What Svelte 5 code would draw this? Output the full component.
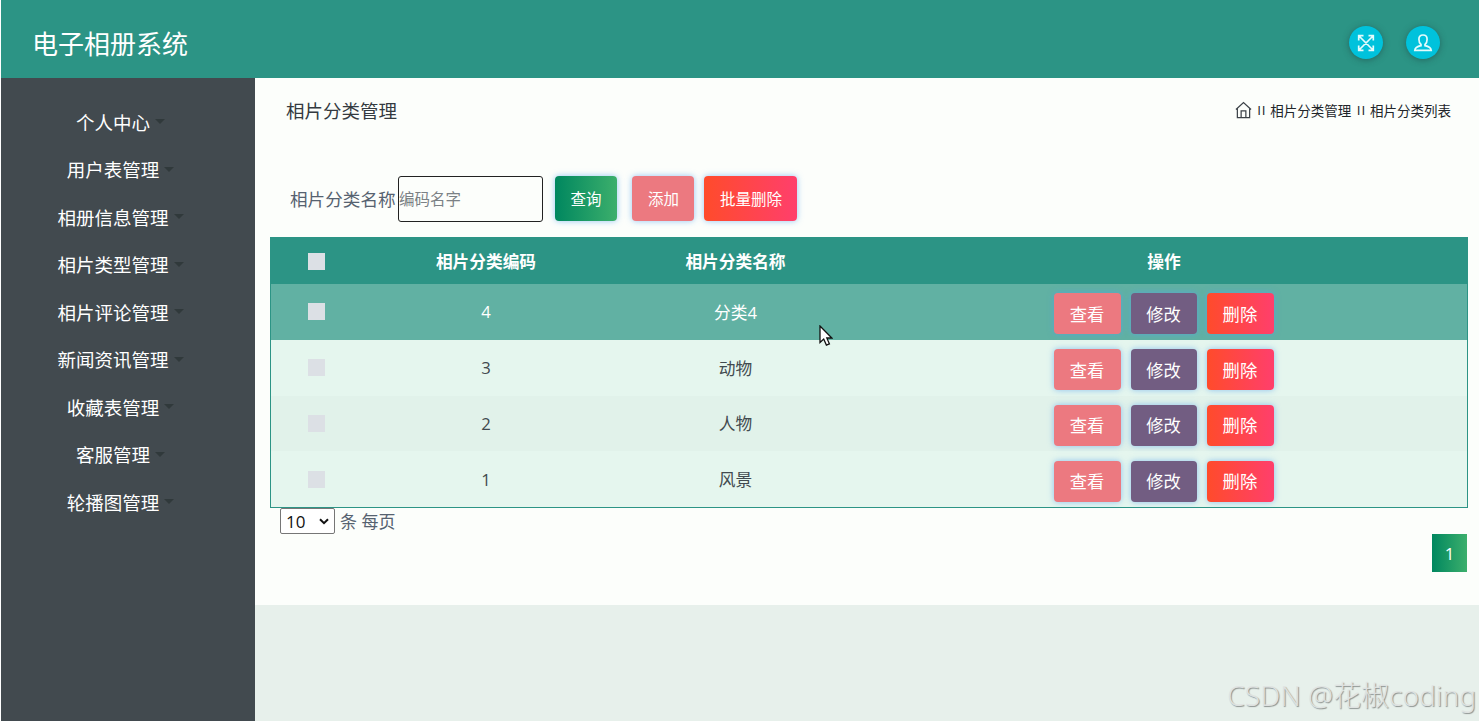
<script>
  const menus = [
    "个人中心",
    "用户表管理",
    "相册信息管理",
    "相片类型管理",
    "相片评论管理",
    "新闻资讯管理",
    "收藏表管理",
    "客服管理",
    "轮播图管理",
  ];

  const rows = [
    { code: 4, name: "分类4" },
    { code: 3, name: "动物" },
    { code: 2, name: "人物" },
    { code: 1, name: "风景" },
  ];

  let keyword = "";
  let pageSize = "10";
</script>

<div class="page">
  <header class="navbar">
    <h1>电子相册系统</h1>
    <div class="nav-icons">
      <button class="round" aria-label="全屏">
        <svg width="18" height="18" viewBox="0 0 18 18" fill="none" stroke="#e4fbfc" stroke-width="1.7">
          <path d="M1.700 6.500V1.700h4.800M11.500 1.700h4.800v4.800M16.300 11.500v4.800h-4.800M6.500 16.300H1.700v-4.800M2 2l14 14M16 2L2 16" />
        </svg>
      </button>
      <button class="round" aria-label="用户">
        <svg width="20" height="20" viewBox="0 0 20 20" fill="none" stroke="#e4fbfc" stroke-width="1.7">
          <path d="M8 11.500C6.400 10.200 5.900 8.200 5.900 6.200C5.900 3.500 7.400 2 10 2s4.100 1.500 4.100 4.200c0 2-.5 4-2.100 5.300v1.200c2.800.6 5.900 1.700 6.200 4.600H1.800c.3-2.900 3.400-4 6.200-4.600z" />
        </svg>
      </button>
    </div>
  </header>

  <div class="body">
    <nav class="sidebar">
      {#each menus as menu}
        <a href="#menu">{menu}<span class="caret"></span></a>
      {/each}
    </nav>

    <main>
      <section class="content">
        <div class="heading">
          <h2>相片分类管理</h2>
          <div class="breadcrumb">
            <svg width="17" height="18" viewBox="0 0 18 18" fill="none" stroke="#3c4248" stroke-width="1.3">
              <path d="M1 8.400L9 1.200l8 7.200M2.500 7v10h13V7M6.500 17V10h5v7" />
            </svg>
            <span class="sep">II</span>
            <span>相片分类管理</span>
            <span class="sep">II</span>
            <span>相片分类列表</span>
          </div>
        </div>

        <div class="search">
          <label for="keyword">相片分类名称</label>
          <input id="keyword" placeholder="编码名字" bind:value={keyword} />
          <button class="btn query">查询</button>
          <button class="btn pink add">添加</button>
          <button class="btn red">批量删除</button>
        </div>

        <table>
          <colgroup>
            <col class="c-check" />
            <col class="c-code" />
            <col class="c-name" />
            <col />
          </colgroup>
          <thead>
            <tr>
              <th><span class="check"></span></th>
              <th>相片分类编码</th>
              <th>相片分类名称</th>
              <th>操作</th>
            </tr>
          </thead>
          <tbody>
            {#each rows as row, index}
              <tr class:active={index === 0}>
                <td><span class="check"></span></td>
                <td>{row.code}</td>
                <td>{row.name}</td>
                <td>
                  <div class="actions">
                    <button class="btn pink">查看</button>
                    <button class="btn purple">修改</button>
                    <button class="btn red">删除</button>
                  </div>
                </td>
              </tr>
            {/each}
          </tbody>
        </table>

        <div class="page-size">
          <div class="select">
            <select bind:value={pageSize} aria-label="每页条数">
              <option>10</option>
              <option>25</option>
              <option>50</option>
            </select>
            <svg width="10" height="7" viewBox="0 0 10 7" fill="none" stroke="#111" stroke-width="2">
              <path d="M1 1.200l4 4 4-4" />
            </svg>
          </div>
          <span>条 每页</span>
        </div>

        <div class="pagination">
          <button>1</button>
        </div>
      </section>
    </main>
  </div>

  <svg class="cursor" width="14" height="22" viewBox="0 0 14 22">
    <path d="M1 1v16.500l3.700-3.400 2.700 6 3-1.300-2.600-5.800h5z" fill="#fff" stroke="#111" stroke-width="1.300" />
  </svg>
  <div class="watermark">CSDN @花椒coding</div>
</div>

<style>
  :global(body) {
    background: #fff;
    overflow: hidden;
  }

  .page {
    position: relative;
    display: flex;
    flex-direction: column;
    box-sizing: border-box;
    width: 1479px;
    height: 721px;
    padding-left: 1px;
    overflow: hidden;
    font-family: "Open Sans", "Noto Sans CJK SC", sans-serif;
    color: #566270;
  }

  button {
    padding: 0;
    border: none;
    color: #fff;
    font-family: inherit;
    cursor: pointer;
  }

  .navbar {
    display: flex;
    justify-content: space-between;
    flex: none;
    height: 77.500px;
    background: #2c9485;
  }

  h1 {
    margin: 25px 0 0 31px;
    color: #fff;
    font-size: 26px;
    line-height: 38px;
    font-weight: 400;
  }

  .nav-icons {
    display: flex;
    gap: 23px;
    padding: 26px 39px 0 0;
  }

  .round {
    display: flex;
    align-items: center;
    justify-content: center;
    width: 34px;
    height: 33px;
    border-radius: 50%;
    background: #00c2dc;
    box-shadow: 0 1px 6px rgba(30, 60, 60, 0.5);
  }

  .body {
    display: flex;
    flex: 1;
    min-height: 0;
  }

  .sidebar {
    flex: none;
    width: 254px;
    padding-top: 20.500px;
    box-sizing: border-box;
    background: #424a4f;
  }

  .sidebar a {
    display: flex;
    align-items: center;
    justify-content: center;
    height: 47.500px;
    padding-right: 15px;
    color: #fff;
    font-size: 18.500px;
    text-decoration: none;
  }

  .caret {
    margin-left: 5px;
    border: 5px solid transparent;
    border-top-color: #30393b;
    border-bottom: none;
  }

  main {
    flex: 1;
    background: #e7f0eb;
  }

  .content {
    box-sizing: border-box;
    height: 527px;
    padding: 0 11px 0 15px;
    background: #fcfefb;
  }

  .heading {
    display: flex;
    justify-content: space-between;
    height: 98px;
    padding: 17px 17px 0 16px;
    box-sizing: border-box;
  }

  h2 {
    margin: 0;
    color: #343a40;
    font-size: 18.500px;
    line-height: 32px;
    font-weight: 400;
  }

  .breadcrumb {
    display: flex;
    align-items: center;
    height: 30px;
    color: #212529;
    font-size: 13.500px;
  }

  .sep {
    margin: 0 4px 0 5.500px;
    letter-spacing: 0.8px;
  }

  .search {
    display: flex;
    align-items: center;
    height: 46px;
    padding-left: 20px;
    font-size: 17.600px;
  }

  label {
    width: 108px;
    white-space: nowrap;
  }

  input {
    width: 145px;
    height: 46px;
    margin-right: 12px;
    padding: 0;
    box-sizing: border-box;
    border: 1px solid #222;
    border-radius: 3px;
    background: transparent;
    font-family: inherit;
    font-size: 15.500px;
  }

  input::placeholder {
    color: #7b8185;
  }

  .btn {
    border-radius: 4px;
    box-shadow: 0 0 6px rgba(80, 160, 240, 0.6);
  }

  .search .btn {
    height: 45px;
    padding: 0 15.500px;
    font-size: 15.500px;
  }

  .search .add {
    margin: 0 10px 0 15.400px;
  }

  .query {
    background: linear-gradient(90deg, #00875f, #3caf6c);
  }

  .pink {
    background: #ec7980;
  }

  .purple {
    background: #725d82;
  }

  .red {
    background: linear-gradient(90deg, #ff4b2b, #ff3f6c);
  }

  table {
    width: 1198px;
    margin-top: 15.500px;
    border: 1px solid #2c9485;
    border-spacing: 0;
    table-layout: fixed;
    font-size: 16.700px;
    text-align: center;
  }

  .c-check {
    width: 91px;
  }

  .c-code {
    width: 248px;
  }

  .c-name {
    width: 251px;
  }

  th,
  td {
    padding: 0;
  }

  th {
    height: 46px;
    background: #2c9485;
    color: #fff;
  }

  td {
    height: 55.750px;
    color: #424a4f;
  }

  tbody tr {
    background: #e5f6ee;
  }

  tbody tr:nth-child(odd) {
    background: #e1f2ea;
  }

  tbody tr.active {
    background: #61b1a3;
  }

  .active td {
    color: #fff;
  }

  .check {
    display: block;
    width: 17px;
    height: 17px;
    margin: 0 auto;
    background: #dce0e5;
  }

  .actions {
    display: flex;
    justify-content: center;
    gap: 10px;
    padding-top: 4px;
  }

  .actions .btn {
    width: 66.400px;
    height: 41px;
    padding: 0 1px 1px 0;
    font-size: 17.300px;
  }

  .page-size {
    display: flex;
    align-items: center;
    gap: 5px;
    height: 26px;
    padding-left: 10px;
    font-size: 17px;
  }

  .page-size > span {
    padding-bottom: 1px;
  }

  .select {
    display: flex;
    align-items: center;
    box-sizing: border-box;
    width: 55px;
    height: 26px;
    border: 1px solid #767676;
    border-radius: 2px;
    background: #fff;
  }

  select {
    width: 38px;
    padding: 0 0 0 5px;
    border: none;
    background: transparent;
    appearance: none;
    color: #111;
    font-family: inherit;
    font-size: 17px;
  }

  .pagination {
    display: flex;
    justify-content: flex-end;
    padding-right: 1px;
  }

  .pagination button {
    width: 35px;
    height: 38px;
    background: linear-gradient(90deg, #00875f, #3caf6c);
    font-size: 17px;
  }

  .cursor {
    position: absolute;
    left: 819px;
    top: 325px;
  }

  .watermark {
    position: absolute;
    right: 3px;
    bottom: 6px;
    color: rgba(225, 228, 227, 0.95);
    font-family: "Noto Sans", "Noto Sans CJK SC", sans-serif;
    font-size: 28.100px;
    font-weight: 300;
    line-height: 40px;
    white-space: nowrap;
    text-shadow: 1px 1px 1px #8c9290;
  }
</style>
